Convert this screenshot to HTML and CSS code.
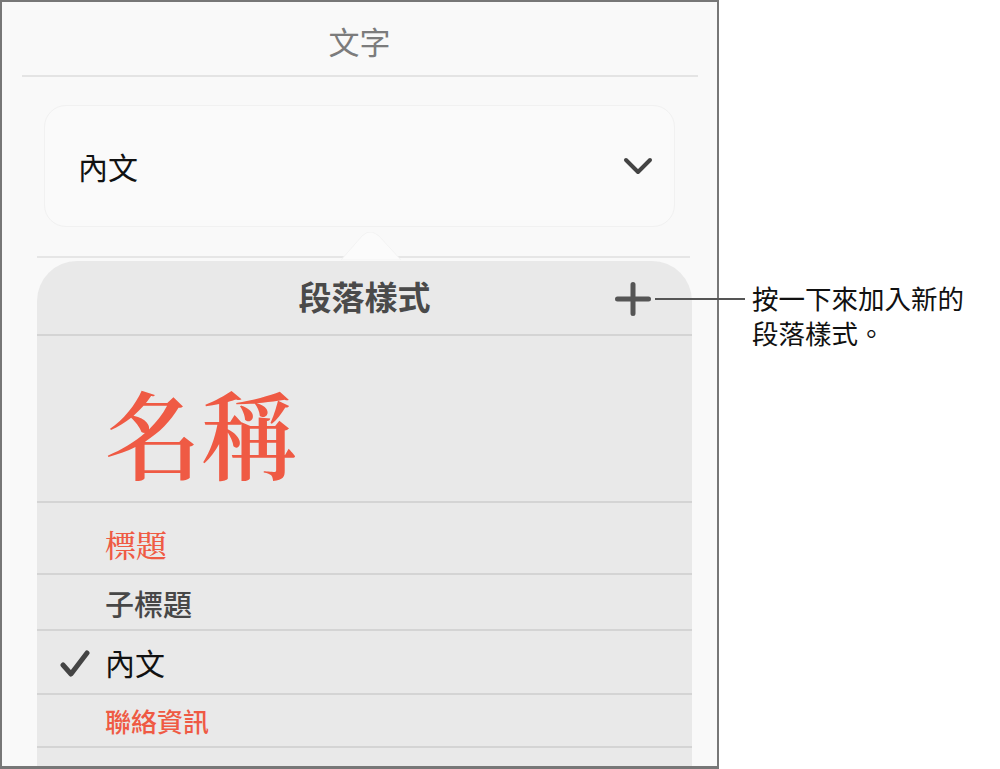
FILE: index.html
```html
<!DOCTYPE html>
<html lang="zh-Hant">
  <head>
    <meta charset="UTF-8" />
    <meta name="viewport" content="width=device-width, initial-scale=1.0" />
    <title>段落樣式</title>
    <link rel="stylesheet" href="styles.css">
  </head>
  <body>
    <div class="page">
      <div class="panel">
        <div class="panel-title">文字</div>
        <div class="rule rule-top"></div>

        <div class="style-picker">
          <span>內文</span>
          <svg class="chevron" width="30" height="18" viewBox="0 0 30 18">
            <path d="M3 3 L15 15 L27 3" fill="none" stroke="#444" stroke-width="4" stroke-linecap="round" stroke-linejoin="round" />
          </svg>
        </div>

        <div class="rule rule-low"></div>

        <div class="popover">
          <div class="popover-head">
            <span>段落樣式</span>
            <svg class="plus" width="36" height="34" viewBox="0 0 36 34">
              <path d="M2.5 17 H33.5 M18 2.5 V31.5" fill="none" stroke="#555" stroke-width="5" stroke-linecap="round" />
            </svg>
          </div>
          <ul class="styles">
            <li class="style-row row-title"><span class="serif red">名稱</span></li>
            <li class="style-row row-heading"><span class="serif red">標題</span></li>
            <li class="style-row row-sub"><span>子標題</span></li>
            <li class="style-row row-body">
              <svg class="check" width="30" height="27" viewBox="0 0 30 27">
                <path d="M3 15 L11 24 L27 3" fill="none" stroke="#444" stroke-width="5" stroke-linecap="round" stroke-linejoin="round" />
              </svg>
              <span>內文</span>
            </li>
            <li class="style-row row-contact"><span class="red">聯絡資訊</span></li>
          </ul>
        </div>

        <!-- small tail of the picker bubble, sitting on the lower rule -->
        <svg class="tail" width="60" height="28" viewBox="0 0 60 28">
          <path d="M0 28 L21 4 Q26 -1 31 0 Q34 1 38 4 L60 28 Z" fill="#fbfbfb" stroke="#f3f3f3" stroke-width="1" />
        </svg>
      </div>

      <div class="callout">
        <div class="callout-line"></div>
        <div class="callout-text">
          <span>按一下來加入新的</span>
          <span>段落樣式。</span>
        </div>
      </div>
    </div>
  </body>
</html>
```

FILE: styles.css
```css
* {
  margin: 0;
  padding: 0;
  box-sizing: border-box;
}

body {
  background: #ffffff;
  font-family: "Noto Sans CJK TC", "Noto Sans", sans-serif;
}

.page {
  position: relative;
  width: 1000px;
  height: 769px;
}

.panel {
  position: relative;
  width: 719px;
  height: 769px;
  border: 2px solid #777;
  border-bottom-width: 3px;
  background: #f9f9f9;
  display: flex;
  flex-direction: column;
  overflow: hidden;
}

.panel-title {
  height: 73px;
  display: flex;
  align-items: center;
  justify-content: center;
  padding-top: 3px;
  font-size: 31px;
  color: #7c7c7c;
}

.rule {
  height: 2px;
  background: #e4e4e4;
}

.rule-top {
  margin: 0 19px 0 20px;
}

.style-picker {
  margin: 28px 0 0 42px;
  width: 631px;
  height: 122px;
  border: 1px solid #f1f1f1;
  border-radius: 22px;
  background: #fafafa;
  display: flex;
  align-items: center;
  justify-content: space-between;
  padding: 0 21px 0 33px;
  font-size: 30px;
  color: #111;
}

.rule-low {
  margin: 29px 0 0 35px;
  width: 653px;
  background: #e6e6e6;
}

.popover {
  margin: 3px 0 0 35px;
  width: 655px;
  flex: 1;
  background: #e9e9e9;
  border-radius: 40px 40px 0 0;
}

.popover-head {
  position: relative;
  height: 75px;
  border-bottom: 2px solid #d4d4d4;
  display: flex;
  align-items: center;
  justify-content: center;
  font-size: 33px;
  font-weight: bold;
  color: #4a4a4a;
  padding-bottom: 4px;
}

.plus {
  position: absolute;
  right: 41px;
  top: 21px;
}

.styles {
  list-style: none;
}

.style-row {
  position: relative;
  display: flex;
  align-items: center;
  padding-left: 68px;
  border-bottom: 2px solid #d4d4d4;
  color: #474747;
}

.row-title {
  height: 167px;
  padding-top: 24px;
  font-size: 96px;
  font-weight: 600;
}

.row-heading {
  height: 72px;
  padding-top: 10px;
  font-size: 31px;
  font-weight: 500;
}

.row-sub {
  height: 56px;
  padding-top: 2px;
  font-size: 29px;
  font-weight: 500;
}

.row-body {
  height: 64px;
  font-size: 30px;
  color: #111;
}

.row-contact {
  height: 53px;
  font-size: 26px;
  font-weight: 500;
}

.check {
  position: absolute;
  left: 23px;
  top: 19px;
}

.serif {
  font-family: "Noto Serif CJK TC", "Noto Serif CJK SC", serif;
}

.red {
  color: #ef5a44;
}

.tail {
  position: absolute;
  left: 339px;
  top: 230px;
}

.callout {
  position: absolute;
  left: 655px;
  top: 280px;
  display: flex;
  align-items: flex-start;
}

.callout-line {
  width: 90px;
  height: 2px;
  margin-top: 18px;
  background: #555;
}

.callout-text {
  margin-left: 7px;
  display: flex;
  flex-direction: column;
  gap: 0;
  font-size: 26.5px;
  line-height: 35px;
  color: #111;
}

.callout-text span {
  display: block;
  height: 35px;
  white-space: nowrap;
}
```
